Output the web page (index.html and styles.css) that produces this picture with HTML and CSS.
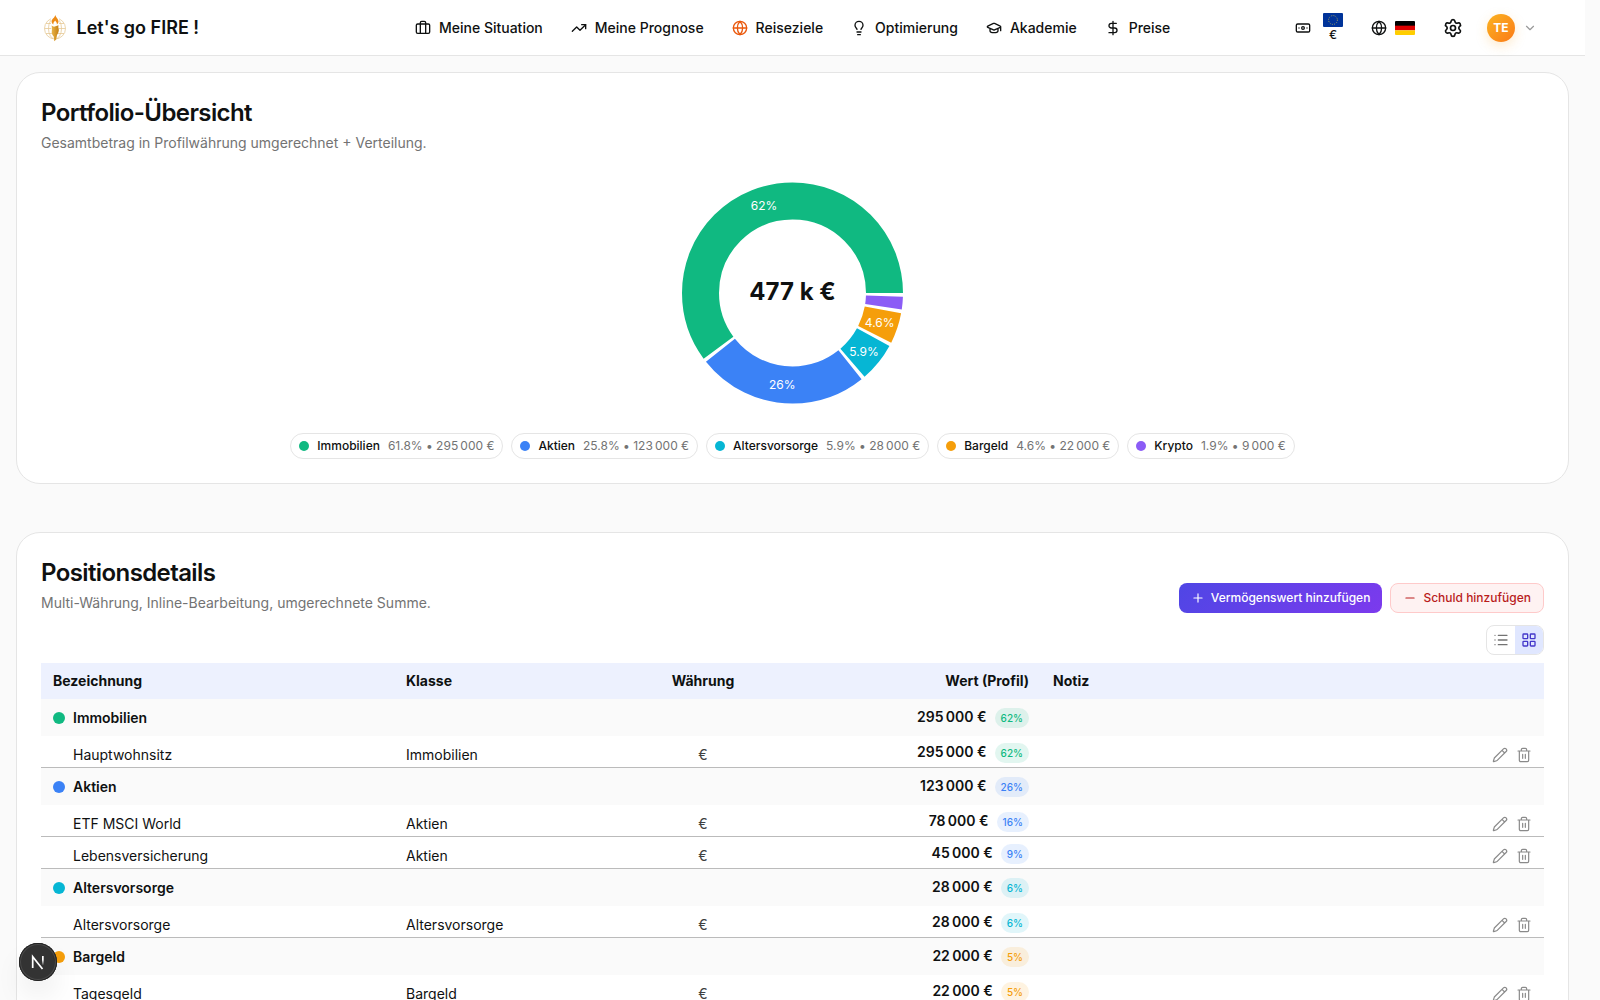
FILE: index.html
```
<!DOCTYPE html>
<html lang="de">
<head>
    <meta charset="utf-8">
    <title>Let's go FIRE !</title>
    <link rel="stylesheet" href="styles.css">
</head>
<body>
    <!-- Icon sprite -->
    <svg class="sprite">
        <symbol id="i-case" viewBox="0 0 24 24"><path d="M16 20V4a2 2 0 0 0-2-2h-4a2 2 0 0 0-2 2v16"/><rect x="2" y="6" width="20" height="14" rx="2"/></symbol>
        <symbol id="i-trend" viewBox="0 0 24 24"><path d="M22 7l-8.5 8.5-5-5L2 17"/><path d="M16 7h6v6"/></symbol>
        <symbol id="i-globe" viewBox="0 0 24 24"><circle cx="12" cy="12" r="10"/><path d="M12 2a14.5 14.5 0 0 0 0 20 14.5 14.5 0 0 0 0-20M2 12h20"/></symbol>
        <symbol id="i-bulb" viewBox="0 0 24 24"><path d="M15 14c.2-1 .7-1.7 1.5-2.5 1-.9 1.5-2.2 1.5-3.5A6 6 0 0 0 6 8c0 1 .2 2.2 1.5 3.5.7.7 1.3 1.5 1.5 2.5M9 18h6M10 22h4"/></symbol>
        <symbol id="i-cap" viewBox="0 0 24 24"><path d="M21.42 10.922a1 1 0 0 0-.019-1.838L12.83 5.18a2 2 0 0 0-1.66 0L2.6 9.08a1 1 0 0 0 0 1.832l8.57 3.908a2 2 0 0 0 1.66 0zM22 10v6M6 12.5V16a6 3 0 0 0 12 0v-3.5"/></symbol>
        <symbol id="i-dollar" viewBox="0 0 24 24"><path d="M12 2v20M17 5H9.5a3.5 3.5 0 0 0 0 7h5a3.5 3.5 0 0 1 0 7H6"/></symbol>
        <symbol id="i-note" viewBox="0 0 24 24"><rect x="2" y="6" width="20" height="12" rx="2"/><circle cx="12" cy="12" r="2"/><path d="M6 12h.01M18 12h.01"/></symbol>
        <symbol id="i-gear" viewBox="0 0 24 24"><path d="M9.671 4.136a2.34 2.34 0 0 1 4.659 0 2.34 2.34 0 0 0 3.319 1.915 2.34 2.34 0 0 1 2.33 4.033 2.34 2.34 0 0 0 0 3.831 2.34 2.34 0 0 1-2.33 4.033 2.34 2.34 0 0 0-3.319 1.915 2.34 2.34 0 0 1-4.659 0 2.34 2.34 0 0 0-3.32-1.915 2.34 2.34 0 0 1-2.33-4.033 2.34 2.34 0 0 0 0-3.831A2.34 2.34 0 0 1 6.35 6.051a2.34 2.34 0 0 0 3.319-1.915"/><circle cx="12" cy="12" r="3"/></symbol>
        <symbol id="i-chevron" viewBox="0 0 24 24"><path d="M6 9l6 6 6-6"/></symbol>
        <symbol id="i-plus" viewBox="0 0 24 24"><path d="M5 12h14M12 5v14"/></symbol>
        <symbol id="i-minus" viewBox="0 0 24 24"><path d="M5 12h14"/></symbol>
        <symbol id="i-list" viewBox="0 0 24 24"><path d="M8 5h13M8 12h13M8 19h13M3 5h.01M3 12h.01M3 19h.01"/></symbol>
        <symbol id="i-grid" viewBox="0 0 24 24"><rect x="3" y="3" width="7" height="7" rx="1"/><rect x="14" y="3" width="7" height="7" rx="1"/><rect x="14" y="14" width="7" height="7" rx="1"/><rect x="3" y="14" width="7" height="7" rx="1"/></symbol>
        <symbol id="i-pencil" viewBox="0 0 24 24"><path d="M21.174 6.812a1 1 0 0 0-3.986-3.987L3.842 16.174a2 2 0 0 0-.5.83l-1.321 4.352a.5.5 0 0 0 .623.622l4.353-1.32a2 2 0 0 0 .83-.497zM15 5l4 4"/></symbol>
        <symbol id="i-trash" viewBox="0 0 24 24"><path d="M3 6h18M19 6v14a2 2 0 0 1-2 2H7a2 2 0 0 1-2-2V6M8 6V4a2 2 0 0 1 2-2h4a2 2 0 0 1 2 2v2M10 11v6M14 11v6"/></symbol>
    </svg>

    <header class="header">
        <a class="brand">
            <svg class="logo" viewBox="0 0 28 28">
                <defs>
                    <linearGradient id="gold" x1="0" x2="1"><stop offset="0" stop-color="#eab54a"/><stop offset="1" stop-color="#c47f12"/></linearGradient>
                </defs>
                <g fill="none" stroke="#e6c995" stroke-width=".8">
                    <circle cx="14" cy="14.5" r="10.5"/>
                    <ellipse cx="14" cy="14.5" rx="6.5" ry="10.5"/>
                    <path d="M3.500 14.500h21M5 9.500h18M5 19.500h18"/>
                </g>
                <path fill="#fff" d="M10 3h8v9l-1 8-3 8-3-8-1-8z"/>
                <path fill="#ed8b16" d="M14.300 1c.6 2.500 3.200 3.800 3.200 6.600 0 1.200-.7 2.200-1.600 3 .2-2-.9-3-1.800-4.200-.9 1.200-2 2.300-1.700 4.100-1-.7-1.800-1.700-1.800-3C10.600 5 13.800 3.800 14.300 1z"/>
                <path fill="url(#gold)" d="M10.500 11.500l2.500 1.200 4.500-1.500c-.2 1.500-.3 2.300.2 3.500.4 1.800-.2 4.300-1.700 6.300l-.8 4.500-1.900 1.800-.6-4.800c-1.500-1.500-2.300-3.500-1.900-5.500.2-1.500.3-3.500-.3-5.500z"/>
            </svg>
            <span>Let's go FIRE !</span>
        </a>
        <nav class="nav">
            <a><svg class="icon"><use href="#i-case"/></svg>Meine Situation</a>
            <a><svg class="icon"><use href="#i-trend"/></svg>Meine Prognose</a>
            <a><svg class="icon orange"><use href="#i-globe"/></svg>Reiseziele</a>
            <a><svg class="icon"><use href="#i-bulb"/></svg>Optimierung</a>
            <a><svg class="icon"><use href="#i-cap"/></svg>Akademie</a>
            <a><svg class="icon"><use href="#i-dollar"/></svg>Preise</a>
        </nav>
        <div class="tools">
            <div class="currency">
                <svg class="icon"><use href="#i-note"/></svg>
                <div class="currency-flag">
                    <svg class="flag" viewBox="0 0 20 14"><rect width="20" height="14" fill="#039"/><circle cx="10" cy="7" r="4.400" fill="none" stroke="#b5ad58" stroke-width=".9" stroke-dasharray="1 1.300"/></svg>
                    <span>€</span>
                </div>
            </div>
            <div class="language">
                <svg class="icon"><use href="#i-globe"/></svg>
                <svg class="flag" viewBox="0 0 20 14"><rect width="20" height="5" fill="#000"/><rect y="4.670" width="20" height="4.670" fill="#d00"/><rect y="9.330" width="20" height="4.670" fill="#ffce00"/></svg>
            </div>
            <svg class="icon gear"><use href="#i-gear"/></svg>
            <div class="user">
                <span class="avatar">TE</span>
                <svg class="icon chevron"><use href="#i-chevron"/></svg>
            </div>
        </div>
    </header>

    <main class="main">
        <!-- Portfolio overview -->
        <section class="card overview">
            <h2>Portfolio-Übersicht</h2>
            <p class="sub">Gesamtbetrag in Profilwährung umgerechnet + Verteilung.</p>
            <!-- ring: 360 units around, 2 units between slices, counter-clockwise from 3 o'clock -->
            <svg class="donut" viewBox="-119.500 -120 240 240">
                <g transform="scale(1 -1)" fill="none" stroke-width="37">
                    <circle r="92" pathLength="360" stroke="#10b981" stroke-dasharray="216.460 143.540"/>
                    <circle r="92" pathLength="360" stroke="#3b82f6" stroke-dasharray="90.250 269.750" stroke-dashoffset="-218.460"/>
                    <circle r="92" pathLength="360" stroke="#06b6d4" stroke-dasharray="20.550 339.450" stroke-dashoffset="-310.710"/>
                    <circle r="92" pathLength="360" stroke="#f59e0b" stroke-dasharray="16.140 343.860" stroke-dashoffset="-333.260"/>
                    <circle r="92" pathLength="360" stroke="#8b5cf6" stroke-dasharray="6.600 353.400" stroke-dashoffset="-351.400"/>
                </g>
                <g class="donut-labels">
                    <text x="-28.500" y="-83">62%</text>
                    <text x="-10.300" y="96">26%</text>
                    <text x="71.500" y="62.500">5.9%</text>
                    <text x="87.200" y="34">4.6%</text>
                </g>
                <text class="donut-total" y="6.500">477 k €</text>
            </svg>
            <div class="legend">
                <div class="pill"><i class="dot green"></i><b>Immobilien</b><span>61.8% • 295&#8239;000 €</span></div>
                <div class="pill"><i class="dot blue"></i><b>Aktien</b><span>25.8% • 123&#8239;000 €</span></div>
                <div class="pill"><i class="dot cyan"></i><b>Altersvorsorge</b><span>5.9% • 28&#8239;000 €</span></div>
                <div class="pill"><i class="dot amber"></i><b>Bargeld</b><span>4.6% • 22&#8239;000 €</span></div>
                <div class="pill"><i class="dot violet"></i><b>Krypto</b><span>1.9% • 9&#8239;000 €</span></div>
            </div>
        </section>

        <!-- Positions -->
        <section class="card">
            <div class="card-head">
                <div>
                    <h2>Positionsdetails</h2>
                    <p class="sub">Multi-Währung, Inline-Bearbeitung, umgerechnete Summe.</p>
                </div>
                <div class="actions">
                    <button class="btn btn-primary"><svg class="icon"><use href="#i-plus"/></svg>Vermögenswert hinzufügen</button>
                    <button class="btn btn-danger"><svg class="icon"><use href="#i-minus"/></svg>Schuld hinzufügen</button>
                </div>
            </div>
            <div class="toggle-row">
                <div class="toggle">
                    <span><svg class="icon"><use href="#i-list"/></svg></span>
                    <span class="on"><svg class="icon"><use href="#i-grid"/></svg></span>
                </div>
            </div>
            <table class="positions">
                <colgroup>
                    <col class="c-name"><col class="c-class"><col class="c-cur"><col class="c-value"><col><col class="c-act">
                </colgroup>
                <thead>
                    <tr><th>Bezeichnung</th><th>Klasse</th><th class="center">Währung</th><th class="right">Wert (Profil)</th><th>Notiz</th><th></th></tr>
                </thead>
                <tbody>
                    <tr class="group">
                        <td colspan="3"><div class="name"><i class="dot green"></i>Immobilien</div></td>
                        <td class="value">295&#8239;000 €<span class="badge green">62%</span></td><td></td><td></td>
                    </tr>
                    <tr class="item">
                        <td>Hauptwohnsitz</td><td>Immobilien</td><td class="center">€</td>
                        <td class="value">295&#8239;000 €<span class="badge green">62%</span></td><td></td>
                        <td class="act"><svg class="icon"><use href="#i-pencil"/></svg><svg class="icon"><use href="#i-trash"/></svg></td>
                    </tr>
                    <tr class="group">
                        <td colspan="3"><div class="name"><i class="dot blue"></i>Aktien</div></td>
                        <td class="value">123&#8239;000 €<span class="badge blue">26%</span></td><td></td><td></td>
                    </tr>
                    <tr class="item">
                        <td>ETF MSCI World</td><td>Aktien</td><td class="center">€</td>
                        <td class="value">78&#8239;000 €<span class="badge blue">16%</span></td><td></td>
                        <td class="act"><svg class="icon"><use href="#i-pencil"/></svg><svg class="icon"><use href="#i-trash"/></svg></td>
                    </tr>
                    <tr class="item">
                        <td>Lebensversicherung</td><td>Aktien</td><td class="center">€</td>
                        <td class="value">45&#8239;000 €<span class="badge blue">9%</span></td><td></td>
                        <td class="act"><svg class="icon"><use href="#i-pencil"/></svg><svg class="icon"><use href="#i-trash"/></svg></td>
                    </tr>
                    <tr class="group">
                        <td colspan="3"><div class="name"><i class="dot cyan"></i>Altersvorsorge</div></td>
                        <td class="value">28&#8239;000 €<span class="badge cyan">6%</span></td><td></td><td></td>
                    </tr>
                    <tr class="item">
                        <td>Altersvorsorge</td><td>Altersvorsorge</td><td class="center">€</td>
                        <td class="value">28&#8239;000 €<span class="badge cyan">6%</span></td><td></td>
                        <td class="act"><svg class="icon"><use href="#i-pencil"/></svg><svg class="icon"><use href="#i-trash"/></svg></td>
                    </tr>
                    <tr class="group">
                        <td colspan="3"><div class="name"><i class="dot amber"></i>Bargeld</div></td>
                        <td class="value">22&#8239;000 €<span class="badge amber">5%</span></td><td></td><td></td>
                    </tr>
                    <tr class="item">
                        <td>Tagesgeld</td><td>Bargeld</td><td class="center">€</td>
                        <td class="value">22&#8239;000 €<span class="badge amber">5%</span></td><td></td>
                        <td class="act"><svg class="icon"><use href="#i-pencil"/></svg><svg class="icon"><use href="#i-trash"/></svg></td>
                    </tr>
                </tbody>
            </table>
        </section>
    </main>

    <div class="dev-badge">
        <svg viewBox="0 0 38 38" fill="none" stroke-width="1.700">
            <defs>
                <linearGradient id="fade" x1="0" y1="0" x2="0" y2="1"><stop offset=".4" stop-color="#fff"/><stop offset="1" stop-color="#fff" stop-opacity="0"/></linearGradient>
            </defs>
            <path stroke="#fff" d="M13.700 25V13.700L23.500 26"/>
            <rect x="23" y="13" width="1.700" height="9.500" fill="url(#fade)"/>
        </svg>
    </div>
</body>
</html>
```
FILE: styles.css
```
* {
    box-sizing: border-box;
}
body {
    margin: 0;
    height: 1000px;
    padding-right: 15px;
    overflow: hidden;
    background: #fafafa;
    color: #0f1111;
    font-family: Inter, "Liberation Sans", sans-serif;
    font-size: 14px;
}
.sprite {
    display: none;
}
.icon {
    width: 16px;
    height: 16px;
    flex: none;
    fill: none;
    stroke: currentColor;
    stroke-width: 2;
    stroke-linecap: round;
    stroke-linejoin: round;
}

/* Header */
.header {
    display: grid;
    grid-template-columns: 415px 1fr auto;
    align-items: center;
    height: 56px;
    padding-right: 48px;
    background: #fff;
    border-bottom: 1px solid #e5e5e5;
}
.brand {
    display: flex;
    align-items: center;
    gap: 8px;
    padding-left: 40.5px;
    font-size: 18px;
    font-weight: 600;
}
.logo {
    width: 28px;
    height: 28px;
}
.nav {
    display: flex;
    gap: 28px;
    font-weight: 500;
}
.nav a {
    display: flex;
    align-items: center;
    gap: 8px;
}
.orange {
    color: #ea580c;
}
.tools,
.currency,
.language,
.user {
    display: flex;
    align-items: center;
}
.tools {
    gap: 28px;
}
.currency {
    gap: 12px;
}
.currency-flag {
    display: flex;
    flex-direction: column;
    align-items: center;
    font-size: 12px;
    font-weight: 500;
    line-height: 15px;
}
.language {
    gap: 8px;
}
.flag {
    display: block;
    width: 20px;
    height: 14px;
    border-radius: 1px;
}
.gear {
    width: 20px;
    height: 20px;
}
.user {
    gap: 8px;
    margin-left: -4px;
}
.avatar {
    width: 28px;
    height: 28px;
    border-radius: 50%;
    background: linear-gradient(135deg, #fbb321, #fb7a17);
    box-shadow: 0 4px 12px rgba(251, 176, 60, 0.25);
    color: #fff;
    font-size: 12px;
    font-weight: 700;
    line-height: 28px;
    text-align: center;
}
.chevron {
    width: 14px;
    height: 14px;
    color: #999;
}

/* Cards */
.main {
    display: flex;
    flex-direction: column;
    gap: 48px;
    padding: 16px;
}
.card {
    flex: none;
    padding: 24px;
    background: #fff;
    border: 1px solid #e5e5e5;
    border-radius: 24px;
}
.overview {
    height: 412px;
}
h2 {
    margin: 0;
    font-size: 24px;
    font-weight: 600;
    line-height: 32px;
    letter-spacing: -0.6px;
}
.sub {
    margin: 4px 0 0;
    color: #737373;
    line-height: 20px;
}
.donut {
    display: block;
    width: 240px;
    height: 240px;
    margin: 20px auto;
}
.donut-labels {
    fill: #fff;
    font-size: 12px;
    text-anchor: middle;
}
.donut-total {
    fill: #0f1111;
    font-size: 24px;
    font-weight: 700;
    text-anchor: middle;
}
.legend {
    display: flex;
    justify-content: center;
    gap: 8px;
}
.pill {
    display: flex;
    align-items: center;
    gap: 8px;
    height: 26px;
    padding: 0 8px;
    border: 1px solid #e5e5e5;
    border-radius: 13px;
    font-size: 12px;
    line-height: 16px;
}
.pill b {
    font-weight: 500;
}
.pill span {
    color: #737373;
    letter-spacing: -0.06px;
}
.dot {
    width: 10px;
    height: 10px;
    flex: none;
    border-radius: 50%;
    background: currentColor;
}
.green { color: #10b981; }
.blue { color: #3b82f6; }
.cyan { color: #06b6d4; }
.amber { color: #f59e0b; }
.violet { color: #8b5cf6; }

/* Positions */
.card-head {
    display: flex;
    justify-content: space-between;
    align-items: flex-end;
}
.actions {
    display: flex;
    gap: 8px;
}
.btn {
    display: flex;
    align-items: center;
    gap: 6px;
    height: 30px;
    padding: 0 12px;
    border: 0;
    border-radius: 8px;
    font: 500 12px/16px Inter, sans-serif;
}
.btn .icon {
    width: 14px;
    height: 14px;
}
.btn-primary {
    background: linear-gradient(135deg, #4f46e5, #7c3aed);
    color: #fff;
}
.btn-danger {
    background: #fef2f2;
    border: 1px solid #fecaca;
    color: #b91c1c;
}
.toggle-row {
    display: flex;
    justify-content: flex-end;
    padding: 12px 0 8px;
}
.toggle {
    display: flex;
    height: 30px;
    border: 1px solid #e5e5e5;
    border-radius: 8px;
    overflow: hidden;
    color: #737373;
}
.toggle span {
    display: flex;
    align-items: center;
    padding: 0 6px;
}
.toggle .on {
    background: #e0e7ff;
    color: #4338ca;
}
.positions {
    width: 100%;
    table-layout: fixed;
    border-collapse: separate;
    border-spacing: 0;
}
.c-name { width: 353px; }
.c-class { width: 232px; }
.c-cur { width: 154px; }
.c-value { width: 261px; }
.c-act { width: 90px; }
.positions th,
.positions td {
    padding: 0 12px;
    text-align: left;
    line-height: 20px;
}
.positions th {
    height: 36px;
    background: #edf1fe;
    font-weight: 700;
}
.positions .center {
    text-align: center;
}
.positions .right,
.positions .value {
    text-align: right;
}
.positions .value {
    font-weight: 600;
    letter-spacing: -0.1px;
    white-space: nowrap;
}
.group td {
    height: 37px;
    background: #fafafa;
    font-weight: 600;
}
.name {
    display: flex;
    align-items: center;
    gap: 8px;
}
.name .dot {
    width: 12px;
    height: 12px;
}
.item td {
    height: 32px;
    padding-top: 7px;
    border-bottom: 1px solid #bbb;
}
.positions .item td:first-child {
    padding-left: 32px;
}
.positions .item .value {
    padding-top: 1px;
}
.item .center {
    color: #404040;
}
.badge {
    display: inline-block;
    height: 20px;
    margin-left: 8px;
    padding: 0 6px;
    border-radius: 10px;
    background: color-mix(in srgb, currentColor 12%, transparent);
    font-size: 10px;
    font-weight: 500;
    letter-spacing: 0;
    line-height: 20px;
}
.positions .act {
    padding-top: 5px;
    text-align: right;
    white-space: nowrap;
    color: #8a8a8a;
}
.act .icon {
    margin-left: 8px;
    stroke-width: 1.8;
    vertical-align: middle;
}

/* Floating dev tools button */
.dev-badge {
    position: fixed;
    left: 19px;
    bottom: 19px;
    width: 38px;
    height: 38px;
    border-radius: 50%;
    background: rgba(38, 38, 38, 0.94);
    box-shadow: inset 0 0 0 1px #222, inset 0 0 0 2px #4a4a4a, 0 16px 32px -8px rgba(0, 0, 0, 0.2);
}
```
